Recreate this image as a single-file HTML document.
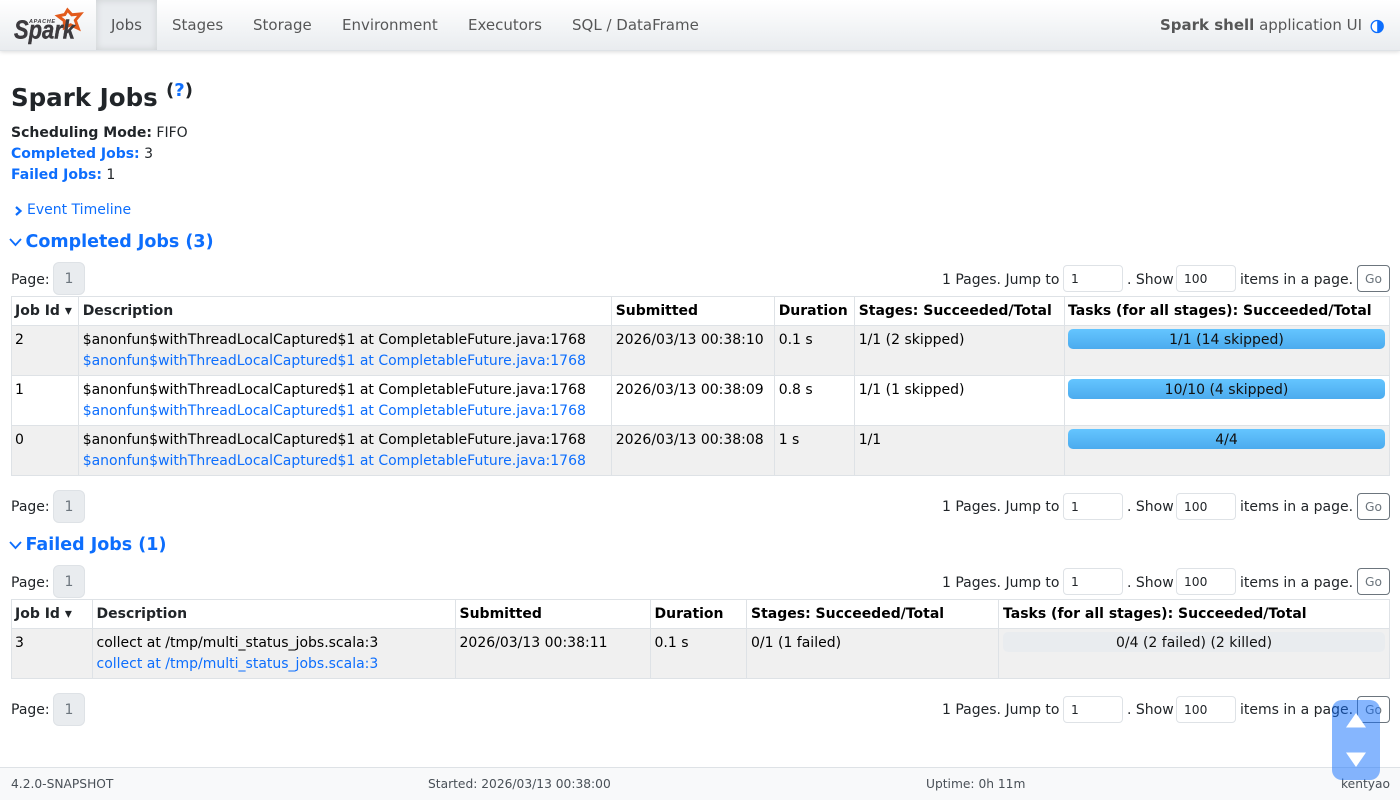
<!DOCTYPE html>
<html lang="en"><head><meta charset="utf-8"><title>Spark Jobs</title>
<style>
*{box-sizing:border-box}
html,body{margin:0;padding:0;width:1400px;height:800px;overflow:hidden;background:#fff}
body{position:relative;font-family:"DejaVu Sans",sans-serif;font-size:14px;color:#212529}
.t{position:absolute;white-space:nowrap;line-height:21px;margin-top:1px}
.k{color:#000}
.l{color:#0d6efd}
b{font-weight:700}
nav{position:absolute;left:0;top:0;width:1400px;height:51px;background:linear-gradient(#fff,#e9ecef);box-shadow:0 1px 4px rgba(0,0,0,.14);border-bottom:1px solid #dee2e6}
.n{position:absolute;top:0;height:50px;line-height:50px;font-size:15px;color:rgba(0,0,0,.65);white-space:nowrap}
.act{position:absolute;left:96px;top:0;width:61px;height:50px;background:#e9ecef;box-shadow:inset 0 0 8px rgba(0,0,0,.12)}
.pg{position:absolute;left:53px;width:32px;height:33px;background:#e9ecef;border:1px solid #dee2e6;border-radius:6px;text-align:center;line-height:33px;color:#6c757d}
.inp{position:absolute;height:27px;width:60px;border:1px solid #dee2e6;border-radius:4px;background:#fff;font-size:12.25px;line-height:27px;padding-left:7px}
.go{position:absolute;left:1357px;width:33px;height:27px;border:1px solid #6c757d;border-radius:4px;font-size:12.25px;line-height:27px;text-align:center;color:#6c757d;background:#fff}
.tb{position:absolute;left:11px;width:1379px;border:1px solid #dee2e6}
.h{position:absolute;background:#dee2e6}
.bg{position:absolute;background:#f0f0f0}
.bar{position:absolute;left:1068px;width:317px;height:20px;border-radius:5px;background:linear-gradient(#64c5ff,#4cabee);text-align:center;line-height:22px;color:#111}
.gb{position:absolute;left:1003px;width:382px;height:20px;border-radius:5px;background:#e9ecef;text-align:center;line-height:22px;color:#111}
h4,h3{margin:0;position:absolute;white-space:nowrap}
footer{position:absolute;left:0;top:767px;width:1400px;height:33px;background:#f8f9fa;border-top:1px solid #dee2e6;font-size:12.25px;color:#495057}
footer span{position:absolute;top:8px;line-height:16px;white-space:nowrap}
.sc{position:absolute;left:1332px;top:700px;width:48px;height:80px;background:rgba(13,110,253,.5);border-radius:10px}
.ar{font-size:14px;line-height:14px}
</style></head><body>

<nav>
<div class="act"></div>
<svg style="position:absolute;left:0;top:0" width="96" height="50" viewBox="0 0 96 50">
<path d="M67.500 10 L71.800 14.800 L80.500 14 L75.300 20.300 L78.300 28.500 L70.500 24.800 L64.300 27.800 L64.300 20.800 L58 16 L64.800 14.500 Z" fill="none" stroke="#e25a1c" stroke-width="3" stroke-linejoin="miter"/>
<text x="14" y="38.500" font-family="'Liberation Sans',sans-serif" font-size="26" font-weight="700" font-style="italic" fill="#3c3a3e" stroke="#3c3a3e" stroke-width=".4" textLength="61" lengthAdjust="spacingAndGlyphs">Spark</text>
<text x="29" y="23" font-family="'Liberation Sans',sans-serif" font-size="5.500" font-weight="700" font-style="italic" fill="#3c3a3e" textLength="26">APACHE</text>
</svg>
<span class="n" style="left:111px">Jobs</span>
<span class="n" style="left:172px">Stages</span>
<span class="n" style="left:253px">Storage</span>
<span class="n" style="left:342px">Environment</span>
<span class="n" style="left:468px">Executors</span>
<span class="n" style="left:572px">SQL / DataFrame</span>
<span class="n" style="left:1160px"><b>Spark shell</b> application UI</span>
<svg style="position:absolute;left:1370px;top:19px" width="15" height="15" viewBox="0 0 15 15"><circle cx="7.200" cy="7.500" r="6" fill="#fff" stroke="#0d6efd" stroke-width="1.300"/><path d="M7.200 1.500a6 6 0 0 1 0 12z" fill="#0d6efd"/></svg>
</nav>

<h3 class="t" style="left:11px;top:82px;font-size:24.500px;line-height:30px;font-weight:700">Spark Jobs</h3>
<span class="t" style="left:166px;top:79px;font-size:18px;font-weight:700;line-height:21px">(<span class="l">?</span>)</span>

<div class="t" style="left:11px;top:122px"><b>Scheduling Mode:</b> FIFO</div>
<div class="t" style="left:11px;top:143px"><b class="l">Completed Jobs:</b> 3</div>
<div class="t" style="left:11px;top:164px"><b class="l">Failed Jobs:</b> 1</div>

<svg style="position:absolute;left:14px;top:205px" width="10" height="12" viewBox="0 0 10 12"><path d="M2 2 L6.500 6 L2 10" fill="none" stroke="#0d6efd" stroke-width="2.200"/></svg>
<div class="t l" style="left:27px;top:199px">Event Timeline</div>

<svg style="position:absolute;left:9px;top:237px" width="14" height="10" viewBox="0 0 14 10"><path d="M1 2 L6.500 8 L12 2" fill="none" stroke="#0d6efd" stroke-width="1.800"/></svg>
<h4 class="t l" style="left:25.500px;top:231px;font-size:17.500px;font-weight:700">Completed Jobs (3)</h4>

<!-- pagination 1 -->
<div class="t" style="left:11px;top:269px">Page:</div><div class="pg" style="top:262px">1</div>
<div class="t" style="left:942px;top:269px">1 Pages. Jump to</div><div class="inp" style="left:1063px;top:265px">1</div>
<div class="t" style="left:1127px;top:269px">. Show</div><div class="inp" style="left:1176px;top:265px">100</div>
<div class="t" style="left:1240px;top:269px">items in a page.</div><div class="go" style="top:265px">Go</div>

<!-- table 1 -->
<div class="bg" style="left:12px;top:326px;width:1377px;height:49px"></div>
<div class="bg" style="left:12px;top:426px;width:1377px;height:49px"></div>
<div class="tb" style="top:296px;height:180px"></div>
<div class="h" style="left:11px;top:325px;width:1379px;height:1px"></div>
<div class="h" style="left:11px;top:375px;width:1379px;height:1px"></div>
<div class="h" style="left:11px;top:425px;width:1379px;height:1px"></div>
<div class="h" style="left:78px;top:296px;width:1px;height:180px"></div>
<div class="h" style="left:611px;top:296px;width:1px;height:180px"></div>
<div class="h" style="left:774px;top:296px;width:1px;height:180px"></div>
<div class="h" style="left:854px;top:296px;width:1px;height:180px"></div>
<div class="h" style="left:1064px;top:296px;width:1px;height:180px"></div>

<div class="t" style="left:15px;top:300px"><b>Job Id <span class="ar">▾</span></b></div>
<div class="t" style="left:82.700px;top:300px"><b>Description</b></div>
<div class="t k" style="left:615.700px;top:300px"><b>Submitted</b></div>
<div class="t k" style="left:778.700px;top:300px"><b>Duration</b></div>
<div class="t k" style="left:858.700px;top:300px"><b>Stages: Succeeded/Total</b></div>
<div class="t k" style="left:1068px;top:300px"><b>Tasks (for all stages): Succeeded/Total</b></div>

<div class="t k" style="left:15px;top:329px">2</div>
<div class="t k" style="left:82.700px;top:329px">$anonfun$withThreadLocalCaptured$1 at CompletableFuture.java:1768</div>
<div class="t l" style="left:82.700px;top:350px">$anonfun$withThreadLocalCaptured$1 at CompletableFuture.java:1768</div>
<div class="t k" style="left:615.700px;top:329px">2026/03/13 00:38:10</div>
<div class="t k" style="left:778.700px;top:329px">0.1 s</div>
<div class="t k" style="left:858.700px;top:329px">1/1 (2 skipped)</div>
<div class="bar" style="top:329px">1/1 (14 skipped)</div>

<div class="t k" style="left:15px;top:379px">1</div>
<div class="t k" style="left:82.700px;top:379px">$anonfun$withThreadLocalCaptured$1 at CompletableFuture.java:1768</div>
<div class="t l" style="left:82.700px;top:400px">$anonfun$withThreadLocalCaptured$1 at CompletableFuture.java:1768</div>
<div class="t k" style="left:615.700px;top:379px">2026/03/13 00:38:09</div>
<div class="t k" style="left:778.700px;top:379px">0.8 s</div>
<div class="t k" style="left:858.700px;top:379px">1/1 (1 skipped)</div>
<div class="bar" style="top:379px">10/10 (4 skipped)</div>

<div class="t k" style="left:15px;top:429px">0</div>
<div class="t k" style="left:82.700px;top:429px">$anonfun$withThreadLocalCaptured$1 at CompletableFuture.java:1768</div>
<div class="t l" style="left:82.700px;top:450px">$anonfun$withThreadLocalCaptured$1 at CompletableFuture.java:1768</div>
<div class="t k" style="left:615.700px;top:429px">2026/03/13 00:38:08</div>
<div class="t k" style="left:778.700px;top:429px">1 s</div>
<div class="t k" style="left:858.700px;top:429px">1/1</div>
<div class="bar" style="top:429px">4/4</div>

<!-- pagination 2 -->
<div class="t" style="left:11px;top:496px">Page:</div><div class="pg" style="top:490px">1</div>
<div class="t" style="left:942px;top:496px">1 Pages. Jump to</div><div class="inp" style="left:1063px;top:493px">1</div>
<div class="t" style="left:1127px;top:496px">. Show</div><div class="inp" style="left:1176px;top:493px">100</div>
<div class="t" style="left:1240px;top:496px">items in a page.</div><div class="go" style="top:493px">Go</div>

<svg style="position:absolute;left:9px;top:540px" width="14" height="10" viewBox="0 0 14 10"><path d="M1 2 L6.500 8 L12 2" fill="none" stroke="#0d6efd" stroke-width="1.800"/></svg>
<h4 class="t l" style="left:25.500px;top:534px;font-size:17.500px;font-weight:700">Failed Jobs (1)</h4>

<!-- pagination 3 -->
<div class="t" style="left:11px;top:572px">Page:</div><div class="pg" style="top:565px">1</div>
<div class="t" style="left:942px;top:572px">1 Pages. Jump to</div><div class="inp" style="left:1063px;top:568px">1</div>
<div class="t" style="left:1127px;top:572px">. Show</div><div class="inp" style="left:1176px;top:568px">100</div>
<div class="t" style="left:1240px;top:572px">items in a page.</div><div class="go" style="top:568px">Go</div>

<!-- table 2 -->
<div class="bg" style="left:12px;top:629px;width:1377px;height:49px"></div>
<div class="tb" style="top:599px;height:80px"></div>
<div class="h" style="left:11px;top:628px;width:1379px;height:1px"></div>
<div class="h" style="left:92px;top:599px;width:1px;height:80px"></div>
<div class="h" style="left:455px;top:599px;width:1px;height:80px"></div>
<div class="h" style="left:650px;top:599px;width:1px;height:80px"></div>
<div class="h" style="left:746px;top:599px;width:1px;height:80px"></div>
<div class="h" style="left:998px;top:599px;width:1px;height:80px"></div>

<div class="t" style="left:15px;top:603px"><b>Job Id <span class="ar">▾</span></b></div>
<div class="t" style="left:96.500px;top:603px"><b>Description</b></div>
<div class="t k" style="left:459.500px;top:603px"><b>Submitted</b></div>
<div class="t k" style="left:654.500px;top:603px"><b>Duration</b></div>
<div class="t k" style="left:751px;top:603px"><b>Stages: Succeeded/Total</b></div>
<div class="t k" style="left:1003px;top:603px"><b>Tasks (for all stages): Succeeded/Total</b></div>

<div class="t k" style="left:15px;top:632px">3</div>
<div class="t k" style="left:96.500px;top:632px">collect at /tmp/multi_status_jobs.scala:3</div>
<div class="t l" style="left:96.500px;top:653px">collect at /tmp/multi_status_jobs.scala:3</div>
<div class="t k" style="left:459.500px;top:632px">2026/03/13 00:38:11</div>
<div class="t k" style="left:654.500px;top:632px">0.1 s</div>
<div class="t k" style="left:751px;top:632px">0/1 (1 failed)</div>
<div class="gb" style="top:632px">0/4 (2 failed) (2 killed)</div>

<!-- pagination 4 -->
<div class="t" style="left:11px;top:699px">Page:</div><div class="pg" style="top:693px">1</div>
<div class="t" style="left:942px;top:699px">1 Pages. Jump to</div><div class="inp" style="left:1063px;top:696px">1</div>
<div class="t" style="left:1127px;top:699px">. Show</div><div class="inp" style="left:1176px;top:696px">100</div>
<div class="t" style="left:1240px;top:699px">items in a page.</div><div class="go" style="top:696px">Go</div>

<footer>
<span style="left:11px">4.2.0-SNAPSHOT</span>
<span style="left:428px">Started: 2026/03/13 00:38:00</span>
<span style="left:926px">Uptime: 0h 11m</span>
<span style="left:1341px">kentyao</span>
</footer>

<div class="sc">
<svg width="48" height="80" viewBox="0 0 48 80" style="position:absolute;left:0;top:0"><path d="M14 27.500 L24 13 L34 27.500 Z" fill="#fff"/><path d="M14 52.500 L34 52.500 L24 67 Z" fill="#fff"/></svg>
</div>
</body></html>
